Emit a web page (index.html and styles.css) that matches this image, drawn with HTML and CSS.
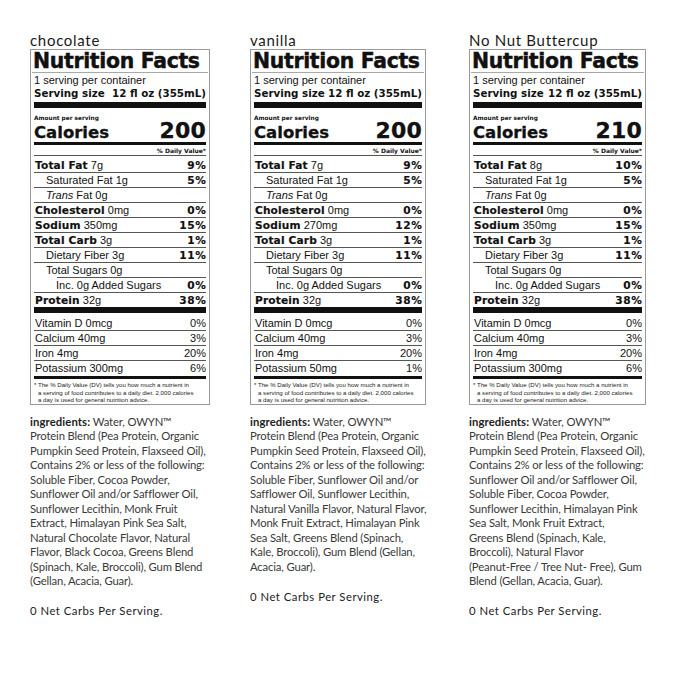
FILE: index.html
```html
<!DOCTYPE html>
<html lang="en">
<head>
<meta charset="utf-8">
<title>OWYN Nutrition Facts</title>
<link rel="stylesheet" href="styles.css">
</head>
<body>
<main class="page">

  <section class="col col-a">
    <div class="flavor">chocolate</div>
    <div class="nf">
      <div class="nf-title">Nutrition Facts</div>
      <div class="nf-servings">1 serving per container</div>
      <div class="nf-size"><span>Serving size</span><span>12 fl oz (355mL)</span></div>
      <div class="bar-lg"></div>
      <div class="nf-amount">Amount per serving</div>
      <div class="nf-cal"><span class="cal-label">Calories</span><span class="cal-val">200</span></div>
      <div class="bar-md"></div>
      <div class="nf-dv">% Daily Value*</div>
      <div class="row row-first"><span><b>Total Fat</b> 7g</span><b class="pct">9%</b></div>
      <div class="row"><span class="ind1">Saturated Fat 1g</span><b class="pct">5%</b></div>
      <div class="row"><span class="ind1"><i>Trans</i> Fat 0g</span></div>
      <div class="row"><span><b>Cholesterol</b> 0mg</span><b class="pct">0%</b></div>
      <div class="row"><span><b>Sodium</b> 350mg</span><b class="pct">15%</b></div>
      <div class="row"><span><b>Total Carb</b> 3g</span><b class="pct">1%</b></div>
      <div class="row"><span class="ind1">Dietary Fiber 3g</span><b class="pct">11%</b></div>
      <div class="row row-sugars"><span class="ind1">Total Sugars 0g</span></div>
      <div class="row"><span class="ind2">Inc. 0g Added Sugars</span><b class="pct">0%</b></div>
      <div class="row row-last"><span><b>Protein</b> 32g</span><b class="pct">38%</b></div>
      <div class="bar-lg"></div>
      <div class="row row-vit-first"><span>Vitamin D 0mcg</span><span>0%</span></div>
      <div class="row"><span>Calcium 40mg</span><span>3%</span></div>
      <div class="row"><span>Iron 4mg</span><span>20%</span></div>
      <div class="row row-last"><span>Potassium 300mg</span><span>6%</span></div>
      <div class="bar-md"></div>
      <p class="foot">* The % Daily Value (DV) tells you how much a nutrient in<br>a serving of food contributes to a daily diet. 2,000 calories<br>a day is used for general nutrition advice.</p>
    </div>
    <div class="ingr">
      <p><b class="ingr-label">ingredients:</b> Water, OWYN™<br>Protein Blend (Pea Protein, Organic<br>Pumpkin Seed Protein, Flaxseed Oil),<br>Contains 2% or less of the following:<br>Soluble Fiber, Cocoa Powder,<br>Sunflower Oil and/or Safflower Oil,<br>Sunflower Lecithin, Monk Fruit<br>Extract, Himalayan Pink Sea Salt,<br>Natural Chocolate Flavor, Natural<br>Flavor, Black Cocoa, Greens Blend<br>(Spinach, Kale, Broccoli), Gum Blend<br>(Gellan, Acacia, Guar).</p>
      <p class="net">0 Net Carbs Per Serving.</p>
    </div>
  </section>

  <section class="col col-b">
    <div class="flavor">vanilla</div>
    <div class="nf">
      <div class="nf-title">Nutrition Facts</div>
      <div class="nf-servings">1 serving per container</div>
      <div class="nf-size"><span>Serving size</span><span>12 fl oz (355mL)</span></div>
      <div class="bar-lg"></div>
      <div class="nf-amount">Amount per serving</div>
      <div class="nf-cal"><span class="cal-label">Calories</span><span class="cal-val">200</span></div>
      <div class="bar-md"></div>
      <div class="nf-dv">% Daily Value*</div>
      <div class="row row-first"><span><b>Total Fat</b> 7g</span><b class="pct">9%</b></div>
      <div class="row"><span class="ind1">Saturated Fat 1g</span><b class="pct">5%</b></div>
      <div class="row"><span class="ind1"><i>Trans</i> Fat 0g</span></div>
      <div class="row"><span><b>Cholesterol</b> 0mg</span><b class="pct">0%</b></div>
      <div class="row"><span><b>Sodium</b> 270mg</span><b class="pct">12%</b></div>
      <div class="row"><span><b>Total Carb</b> 3g</span><b class="pct">1%</b></div>
      <div class="row"><span class="ind1">Dietary Fiber 3g</span><b class="pct">11%</b></div>
      <div class="row row-sugars"><span class="ind1">Total Sugars 0g</span></div>
      <div class="row"><span class="ind2">Inc. 0g Added Sugars</span><b class="pct">0%</b></div>
      <div class="row row-last"><span><b>Protein</b> 32g</span><b class="pct">38%</b></div>
      <div class="bar-lg"></div>
      <div class="row row-vit-first"><span>Vitamin D 0mcg</span><span>0%</span></div>
      <div class="row"><span>Calcium 40mg</span><span>3%</span></div>
      <div class="row"><span>Iron 4mg</span><span>20%</span></div>
      <div class="row row-last"><span>Potassium 50mg</span><span>1%</span></div>
      <div class="bar-md"></div>
      <p class="foot">* The % Daily Value (DV) tells you how much a nutrient in<br>a serving of food contributes to a daily diet. 2,000 calories<br>a day is used for general nutrition advice.</p>
    </div>
    <div class="ingr">
      <p><b class="ingr-label">ingredients:</b> Water, OWYN™<br>Protein Blend (Pea Protein, Organic<br>Pumpkin Seed Protein, Flaxseed Oil),<br>Contains 2% or less of the following:<br>Soluble Fiber, Sunflower Oil and/or<br>Safflower Oil, Sunflower Lecithin,<br>Natural Vanilla Flavor, Natural Flavor,<br>Monk Fruit Extract, Himalayan Pink<br>Sea Salt, Greens Blend (Spinach,<br>Kale, Broccoli), Gum Blend (Gellan,<br>Acacia, Guar).</p>
      <p class="net">0 Net Carbs Per Serving.</p>
    </div>
  </section>

  <section class="col col-c">
    <div class="flavor">No Nut Buttercup</div>
    <div class="nf">
      <div class="nf-title">Nutrition Facts</div>
      <div class="nf-servings">1 serving per container</div>
      <div class="nf-size"><span>Serving size</span><span>12 fl oz (355mL)</span></div>
      <div class="bar-lg"></div>
      <div class="nf-amount">Amount per serving</div>
      <div class="nf-cal"><span class="cal-label">Calories</span><span class="cal-val">210</span></div>
      <div class="bar-md"></div>
      <div class="nf-dv">% Daily Value*</div>
      <div class="row row-first"><span><b>Total Fat</b> 8g</span><b class="pct">10%</b></div>
      <div class="row"><span class="ind1">Saturated Fat 1g</span><b class="pct">5%</b></div>
      <div class="row"><span class="ind1"><i>Trans</i> Fat 0g</span></div>
      <div class="row"><span><b>Cholesterol</b> 0mg</span><b class="pct">0%</b></div>
      <div class="row"><span><b>Sodium</b> 350mg</span><b class="pct">15%</b></div>
      <div class="row"><span><b>Total Carb</b> 3g</span><b class="pct">1%</b></div>
      <div class="row"><span class="ind1">Dietary Fiber 3g</span><b class="pct">11%</b></div>
      <div class="row row-sugars"><span class="ind1">Total Sugars 0g</span></div>
      <div class="row"><span class="ind2">Inc. 0g Added Sugars</span><b class="pct">0%</b></div>
      <div class="row row-last"><span><b>Protein</b> 32g</span><b class="pct">38%</b></div>
      <div class="bar-lg"></div>
      <div class="row row-vit-first"><span>Vitamin D 0mcg</span><span>0%</span></div>
      <div class="row"><span>Calcium 40mg</span><span>3%</span></div>
      <div class="row"><span>Iron 4mg</span><span>20%</span></div>
      <div class="row row-last"><span>Potassium 300mg</span><span>6%</span></div>
      <div class="bar-md"></div>
      <p class="foot">* The % Daily Value (DV) tells you how much a nutrient in<br>a serving of food contributes to a daily diet. 2,000 calories<br>a day is used for general nutrition advice.</p>
    </div>
    <div class="ingr">
      <p><b class="ingr-label">ingredients:</b> Water, OWYN™<br>Protein Blend (Pea Protein, Organic<br>Pumpkin Seed Protein, Flaxseed Oil),<br>Contains 2% or less of the following:<br>Sunflower Oil and/or Safflower Oil,<br>Soluble Fiber, Cocoa Powder,<br>Sunflower Lecithin, Himalayan Pink<br>Sea Salt, Monk Fruit Extract,<br>Greens Blend (Spinach, Kale,<br>Broccoli), Natural Flavor<br>(Peanut-Free / Tree Nut- Free), Gum<br>Blend (Gellan, Acacia, Guar).</p>
      <p class="net">0 Net Carbs Per Serving.</p>
    </div>
  </section>

</main>
</body>
</html>
```

FILE: styles.css
```css
* { box-sizing: border-box; }

html, body {
  margin: 0;
  padding: 0;
  background: #ffffff;
}

.page {
  display: grid;
  grid-template-columns: 220px 219px 190px;
  padding: 32px 0 0 30px;
  color: #111;
}

.flavor {
  font-family: Lato, "Noto Sans", sans-serif;
  font-size: 15px;
  line-height: 17px;
  letter-spacing: 0.7px;
  color: #1a1a1a;
  white-space: nowrap;
}

/* ---------- Nutrition facts panel ---------- */
.nf {
  border: 1px solid #9a9a9a;
  padding: 0 3px;
  font-family: "Liberation Sans", Arial, sans-serif;
  color: #111;
}
.col-a .nf { width: 180px; }
.col-b .nf { width: 176px; }
.col-c .nf { width: 177px; }

.nf b {
  font-family: "DejaVu Sans", sans-serif;
  font-weight: bold;
}

.nf-title {
  font-family: "DejaVu Sans", sans-serif;
  font-weight: bold;
  font-size: 20.4px;
  line-height: 22px;
  letter-spacing: -0.3px;
  white-space: nowrap;
  border-bottom: 1px solid #a8a8a8;
  margin: 0 -2px;
  padding-left: 1px;
  -webkit-text-stroke: 0.45px #111;
}

.nf-servings {
  font-size: 11px;
  line-height: 13px;
  padding-top: 1px;
  white-space: nowrap;
}

.nf-size {
  display: flex;
  justify-content: space-between;
  font-family: "DejaVu Sans", sans-serif;
  font-weight: bold;
  font-size: 10.3px;
  line-height: 13px;
  white-space: nowrap;
}

.bar-lg {
  height: 6px;
  background: #111;
  margin-top: 2px;
}

.bar-md {
  height: 3px;
  background: #111;
  margin-top: 1px;
}

.nf-amount {
  font-family: "DejaVu Sans", sans-serif;
  font-weight: bold;
  font-size: 5.8px;
  line-height: 8px;
  padding-top: 6px;
  white-space: nowrap;
}

.nf-cal {
  display: flex;
  justify-content: space-between;
  align-items: baseline;
  height: 19px;
  line-height: 18px;
  font-family: "DejaVu Sans", sans-serif;
  font-weight: bold;
  -webkit-text-stroke: 0.3px #111;
}
.cal-label { font-size: 16.5px; }
.cal-val { font-size: 22px; letter-spacing: 0.2px; }

.nf-dv {
  font-family: "DejaVu Sans", sans-serif;
  font-weight: bold;
  font-size: 6px;
  line-height: 8px;
  padding-top: 2px;
  text-align: right;
  border-bottom: 1px solid #555;
}

.row {
  display: flex;
  justify-content: space-between;
  align-items: baseline;
  font-size: 11px;
  line-height: 14px;
  border-bottom: 1px solid #555;
  white-space: nowrap;
  padding: 0 0 0 1px;
}
.row-first { padding-top: 2px; }
.row-vit-first { padding-top: 3px; }
.row-last { border-bottom: none; }
.row-last + .bar-lg { margin-top: 0; }

.row-sugars {
  border-bottom: none;
  background: linear-gradient(#555, #555) no-repeat right bottom / calc(100% - 23px) 1px;
  padding-bottom: 1px;
}

.row b {
  font-size: 10.6px;
  letter-spacing: 0.15px;
  -webkit-text-stroke: 0.15px #111;
}
.row .pct { letter-spacing: 0.7px; margin-right: -0.7px; }
.row i { font-style: italic; }
.ind1 { padding-left: 11px; }
.ind2 { padding-left: 21px; }

.foot {
  margin: 0;
  padding: 2px 0 0 4px;
  font-size: 6.1px;
  line-height: 7.6px;
  text-indent: -4px;
  white-space: nowrap;
  color: #222;
}

/* ---------- Ingredients ---------- */
.ingr {
  margin-top: 10px;
  font-family: Lato, "Noto Sans", sans-serif;
  font-size: 11.3px;
  line-height: 14.5px;
  color: #3a3a3a;
  letter-spacing: -0.15px;
  white-space: nowrap;
}
.ingr p { margin: 0; }
.ingr-label {
  font-weight: bold;
  color: #222;
  letter-spacing: 0.1px;
}
.net {
  margin-top: 15.5px !important;
  color: #222;
  letter-spacing: 0.5px;
}
```
